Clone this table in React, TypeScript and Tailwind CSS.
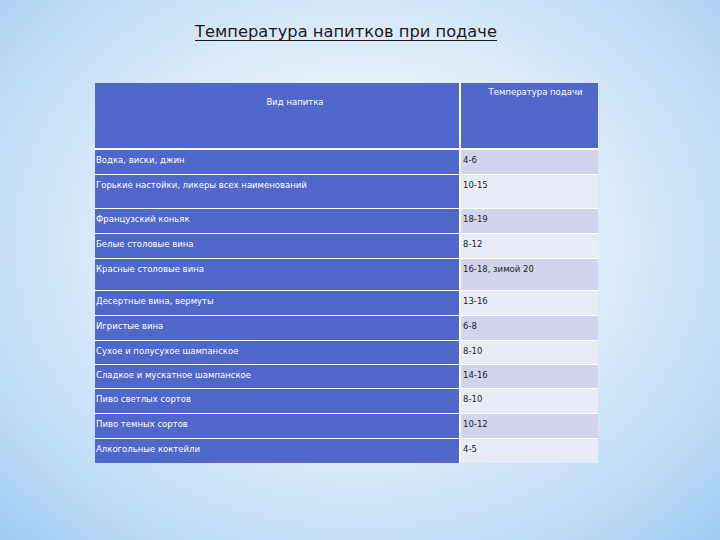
const rows: { name: string; temp: string; h: string }[] = [
  { name: "Водка, виски, джин", temp: "4-6", h: "h-[25px]" },
  { name: "Горькие настойки, ликеры всех наименований", temp: "10-15", h: "h-[34px]" },
  { name: "Французский коньяк", temp: "18-19", h: "h-[25px]" },
  { name: "Белые столовые вина", temp: "8-12", h: "h-[25px]" },
  { name: "Красные столовые вина", temp: "16-18, зимой 20", h: "h-[32px]" },
  { name: "Десертные вина, вермуты", temp: "13-16", h: "h-[25px]" },
  { name: "Игристые вина", temp: "6-8", h: "h-[25px]" },
  { name: "Сухое и полусухое шампанское", temp: "8-10", h: "h-[24px]" },
  { name: "Сладкое и мускатное шампанское", temp: "14-16", h: "h-[24px]" },
  { name: "Пиво светлых сортов", temp: "8-10", h: "h-[25px]" },
  { name: "Пиво темных сортов", temp: "10-12", h: "h-[25px]" },
  { name: "Алкогольные коктейли", temp: "4-5", h: "h-[24px]" },
];

export default function App() {
  return (
    <div className="w-[720px] h-[540px] overflow-hidden bg-[radial-gradient(ellipse_at_50%_45%,#f3f8fd_0%,#e5f0fb_40%,#bcdbf6_80%,#9fcbf3_100%)] font-['DejaVu_Sans',sans-serif]">
      <h1 className="pt-[22px] pr-[28px] text-center text-[16.3px] leading-[20px] text-[#1b1b1b] underline underline-offset-[3px] decoration-1">
        Температура напитков при подаче
      </h1>

      <div className="ml-[95px] mt-[41px] w-[503px] text-[8.5px] leading-[11px]">
        <div className="flex h-[67px] border-b-2 border-white">
          <div className="w-[366px] bg-[#4f68c9] border-r-2 border-white text-white text-center pl-[36px] pt-[14px]">
            Вид напитка
          </div>
          <div className="flex-1 bg-[#4f68c9] text-white text-center pl-[12px] pt-[4px]">
            Температура подачи
          </div>
        </div>
        {rows.map((r, i) => (
          <div key={r.name} className={`flex ${r.h} border-b-[1.5px] border-white last:border-b-0`}>
            <div className="w-[366px] bg-[#4f68c9] border-r-2 border-white text-white pl-[1px] pt-[5px]">
              {r.name}
            </div>
            <div
              className={`flex-1 pl-[2px] pt-[5px] text-[#1c1c2a] ${
                i % 2 === 0 ? "bg-[#d2d3ec]" : "bg-[#e9ebf6]"
              }`}
            >
              {r.temp}
            </div>
          </div>
        ))}
      </div>
    </div>
  );
}
